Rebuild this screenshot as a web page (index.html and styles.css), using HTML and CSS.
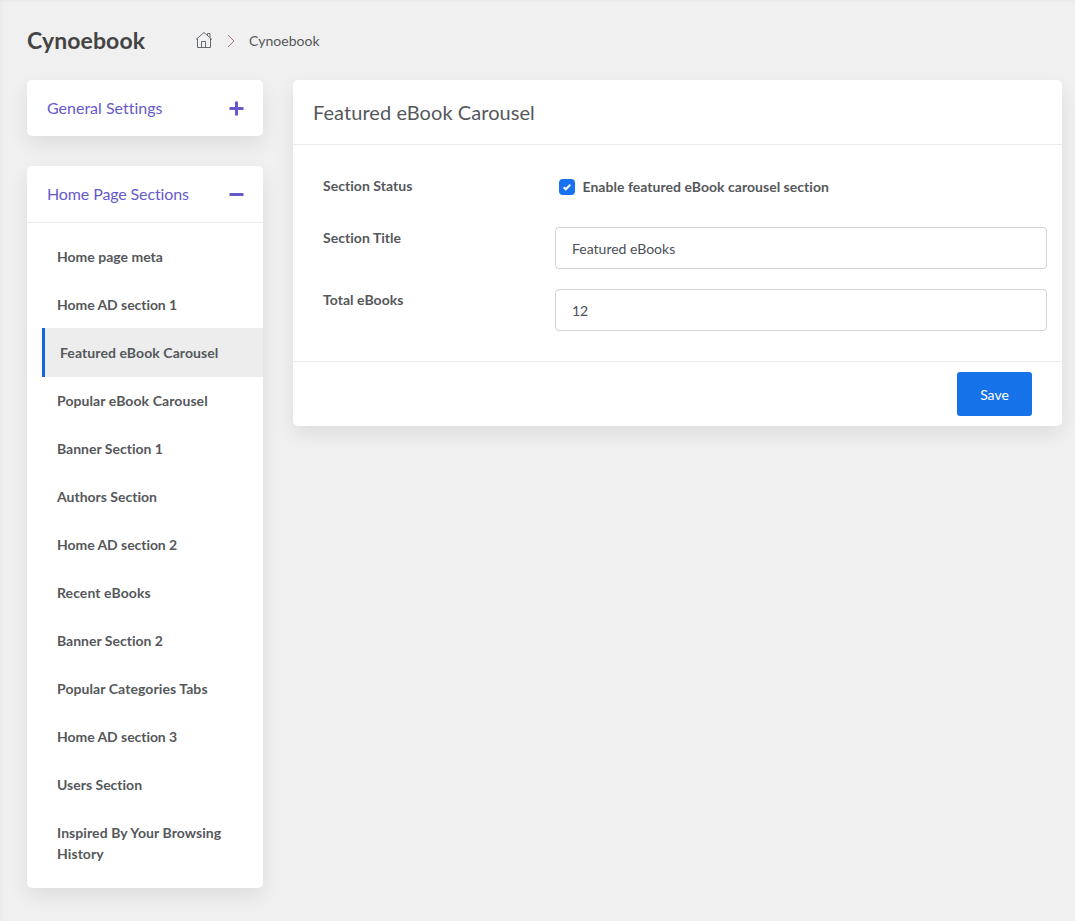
FILE: index.html
```html
<!DOCTYPE html>
<html lang="en">
<head>
<meta charset="utf-8">
<title>Cynoebook</title>
<link rel="stylesheet" href="styles.css">
</head>
<body>
<header class="page-head">
  <h1 class="page-title">Cynoebook</h1>
  <nav class="crumbs">
    <svg class="home" width="18" height="18" viewBox="0 0 18 18"><path d="M1 8.500L9 1.500l8 7M12.500 4.500V2.500h2.500V6.500M2.500 7.500V16.500h13V7.500M6.500 16V10.500h4V16"/></svg>
    <svg class="chevron" width="8" height="14" viewBox="0 0 8 14"><path d="M1 1l6 6-6 6"/></svg>
    <span class="crumb">Cynoebook</span>
  </nav>
</header>
<main class="layout">
  <aside class="sidebar">
    <section class="card">
      <a class="group-head"><span>General Settings</span>
        <svg width="15" height="15" viewBox="0 0 15 15"><path d="M.5 7.500h14M7.500 .5v14"/></svg></a>
    </section>
    <section class="card">
      <a class="group-head open"><span>Home Page Sections</span>
        <svg width="15" height="15" viewBox="0 0 15 15"><path d="M.5 7.500h14"/></svg></a>
      <ul class="menu">
        <li>Home page meta</li>
        <li class="tight">Home AD section 1</li>
        <li class="active loose">Featured eBook Carousel</li>
        <li class="loose">Popular eBook Carousel</li>
        <li>Banner Section 1</li>
        <li>Authors Section</li>
        <li class="tight">Home AD section 2</li>
        <li class="loose">Recent eBooks</li>
        <li>Banner Section 2</li>
        <li class="loose">Popular Categories Tabs</li>
        <li class="tight">Home AD section 3</li>
        <li>Users Section</li>
        <li class="loose">Inspired By Your Browsing History</li>
      </ul>
    </section>
  </aside>
  <form class="card panel">
    <h2 class="panel-title">Featured eBook Carousel</h2>
    <div class="fields">
      <div class="row status">
        <span class="label">Section Status</span>
        <label class="check"><span class="box"><svg width="16" height="16" viewBox="0 0 16 16"><path d="M4.700 8.200l2.100 2.100 4.500-4.500"/></svg></span><span class="check-text">Enable featured eBook carousel section</span></label>
      </div>
      <div class="row">
        <label class="label" for="title">Section Title</label>
        <input class="input" id="title" type="text" value="Featured eBooks">
      </div>
      <div class="row">
        <label class="label" for="total">Total eBooks</label>
        <input class="input" id="total" type="text" value="12">
      </div>
    </div>
    <footer class="panel-foot"><button class="save" type="button">Save</button></footer>
  </form>
</main>
</body>
</html>
```
FILE: styles.css
```css
* { box-sizing: border-box; }
body {
  margin: 0;
  height: 921px;
  overflow: hidden;
  background: #f0f0f0;
  box-shadow: inset 0 3px 4px -3px rgba(0, 0, 0, .06), inset 5px 0 7px -5px rgba(0, 0, 0, .04);
  color: #55585b;
  font: 14px/21px Lato, sans-serif;
  font-variant-ligatures: none;
}
.page-head { display: flex; align-items: center; height: 80px; padding: 0 27px; }
.page-title {
  width: 144px;
  margin: 0;
  padding-bottom: 1px;
  border-right: 1px solid #eeeeee;
  color: #444;
  font-size: 23px;
  font-weight: 700;
  letter-spacing: .1px;
  line-height: 36px;
}
.crumbs { display: flex; align-items: center; padding-left: 24px; }
.crumbs svg { fill: none; stroke: #666b73; stroke-width: 1; }
.crumbs .home { margin-bottom: 1px; }
.crumbs .chevron { margin: 2px 14px 0; stroke: #a0707c; }
.crumb { letter-spacing: .05px; }
.layout { display: flex; align-items: flex-start; gap: 30px; padding: 0 13px 0 27px; }
.sidebar { display: flex; flex-direction: column; gap: 30px; width: 236px; }
.card { border-radius: 5px; background: #fff; box-shadow: 0 8px 20px rgba(0, 0, 0, .08); }
.group-head {
  display: flex;
  align-items: center;
  justify-content: space-between;
  height: 56px;
  padding: 0 19px 0 20px;
  color: #665acb;
  font-size: 16px;
}
.group-head span { margin-top: -2px; }
.group-head.open { height: 57px; border-bottom: 1px solid #ebebeb; letter-spacing: -.12px; }
.group-head svg { fill: none; stroke: #665acb; stroke-width: 3; }
.menu { margin: 0; padding: 10px 0 10px 15px; list-style: none; font-weight: 700; }
.menu li { padding: 13px 15px 14px; }
.menu .active { margin-top: -1px; padding-top: 14px; border-left: 3px solid #1266df; background: #ededed; }
.menu .loose { letter-spacing: .08px; }
.menu .tight { letter-spacing: -.06px; }
.panel { flex: 1; }
.panel-title {
  height: 65px;
  margin: 0;
  padding: 0 20px;
  border-bottom: 1px solid #ebebeb;
  font-size: 20px;
  font-weight: 400;
  letter-spacing: .06px;
  line-height: 64px;
}
.fields { display: flex; flex-direction: column; gap: 20px; padding: 30px 15px; }
.row { display: grid; grid-template-columns: 232px 1fr; padding-left: 15px; }
.status { height: 32px; }
.label { font-weight: 700; letter-spacing: .04px; }
.check { display: flex; align-items: center; gap: 7.500px; height: 24px; padding-left: 4px; font-weight: 700; letter-spacing: .03px; }
.check-text { margin-top: -2px; }
.box { width: 16px; height: 16px; border-radius: 4px; background: #1672f0; }
.box svg { display: block; fill: none; stroke: #fff; stroke-width: 2; }
.input {
  width: 100%;
  height: 42px;
  padding: 1px 16px 0;
  border: 1px solid #ced4da;
  border-radius: 4px;
  background: #fff;
  color: #495057;
  font: inherit;
}
.panel-foot { display: flex; justify-content: flex-end; padding: 10px 30px; border-top: 1px solid #ebebeb; }
.save { width: 75px; height: 44px; padding: 0; border: 0; border-radius: 3px; background: #1672e8; color: #fff; font: inherit; }
```
